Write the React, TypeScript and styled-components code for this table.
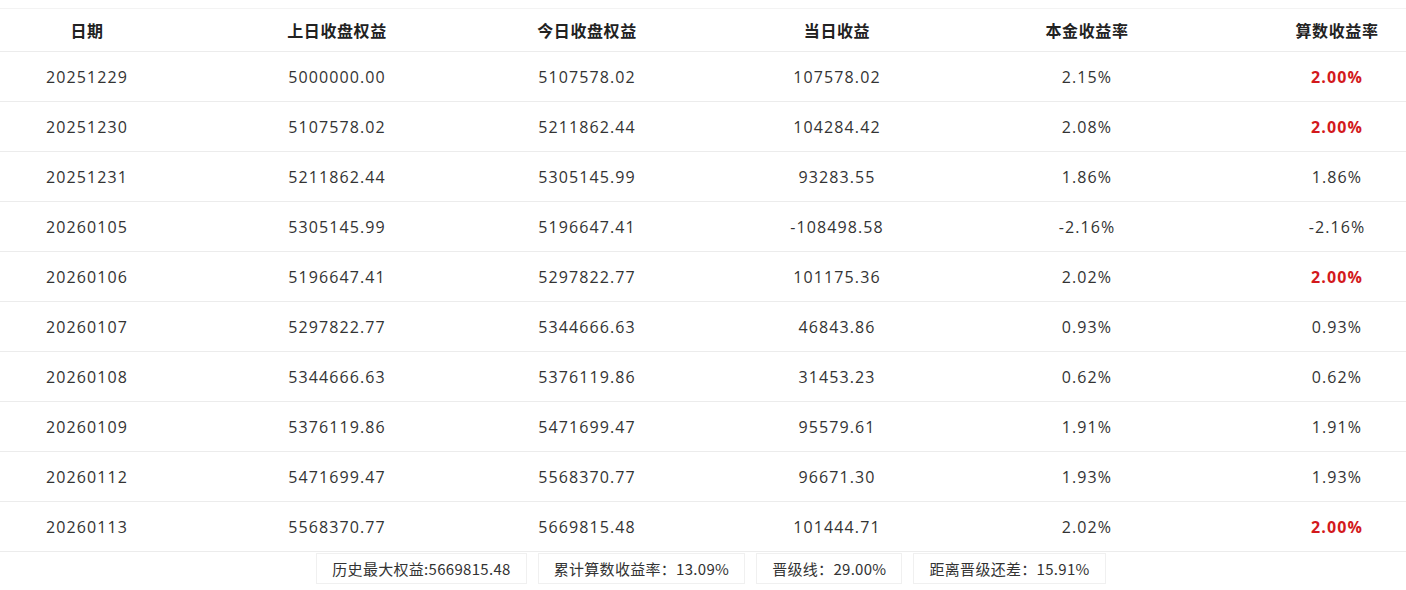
import React from "react";
import styled, { createGlobalStyle } from "styled-components";

const Global = createGlobalStyle`
  html, body { margin: 0; padding: 0; background: #fff; overflow: hidden; }
  body { font-family: "Open Sans", "Noto Sans CJK SC", sans-serif; color: #333; }
`;

const Page = styled.div`
  width: 1406px;
  overflow: hidden;
  padding-top: 8px;
`;

const Table = styled.div`
  width: 1462px;
  border-top: 1px solid #f3f3f3;
`;

const Row = styled.div<{ $head?: boolean }>`
  display: grid;
  grid-template-columns: 212px repeat(5, 250px);
  height: ${(p) => (p.$head ? 42 : 49)}px;
  border-bottom: 1px solid #ececec;
  align-items: center;
  & > :first-child {
    padding-right: 38px;
  }
`;

const HeadCell = styled.div`
  text-align: center;
  font-family: "Noto Sans CJK SC", sans-serif;
  font-weight: 700;
  font-size: 16px;
  color: #222;
  letter-spacing: 0.6px;
`;

const Cell = styled.div<{ $red?: boolean }>`
  text-align: center;
  font-size: 16px;
  letter-spacing: 1.1px;
  color: ${(p) => (p.$red ? "#d3191c" : "#333")};
  font-weight: ${(p) => (p.$red ? 700 : 400)};
`;

const Footer = styled.div`
  display: flex;
  justify-content: center;
  gap: 11px;
  padding-left: 16px;
  margin-top: 1px;
`;

const Stat = styled.div`
  height: 29px;
  display: flex;
  align-items: center;
  padding: 0 15px;
  border: 1px solid #f0f0f0;
  font-family: "Noto Sans CJK SC", sans-serif;
  font-size: 15px;
  letter-spacing: 0.3px;
  color: #333;
`;

const rows: [string, string, string, string, string, string][] = [
  ["20251229", "5000000.00", "5107578.02", "107578.02", "2.15%", "2.00%"],
  ["20251230", "5107578.02", "5211862.44", "104284.42", "2.08%", "2.00%"],
  ["20251231", "5211862.44", "5305145.99", "93283.55", "1.86%", "1.86%"],
  ["20260105", "5305145.99", "5196647.41", "-108498.58", "-2.16%", "-2.16%"],
  ["20260106", "5196647.41", "5297822.77", "101175.36", "2.02%", "2.00%"],
  ["20260107", "5297822.77", "5344666.63", "46843.86", "0.93%", "0.93%"],
  ["20260108", "5344666.63", "5376119.86", "31453.23", "0.62%", "0.62%"],
  ["20260109", "5376119.86", "5471699.47", "95579.61", "1.91%", "1.91%"],
  ["20260112", "5471699.47", "5568370.77", "96671.30", "1.93%", "1.93%"],
  ["20260113", "5568370.77", "5669815.48", "101444.71", "2.02%", "2.00%"],
];

const heads = ["日期", "上日收盘权益", "今日收盘权益", "当日收益", "本金收益率", "算数收益率"];

export default function App() {
  return (
    <Page>
      <Global />
      <Table>
        <Row $head>
          {heads.map((h) => (
            <HeadCell key={h}>{h}</HeadCell>
          ))}
        </Row>
        {rows.map((r) => (
          <Row key={r[0]}>
            {r.map((v, i) => (
              <Cell key={i} $red={i === 5 && v === "2.00%"}>
                {v}
              </Cell>
            ))}
          </Row>
        ))}
      </Table>
      <Footer>
        <Stat>历史最大权益:5669815.48</Stat>
        <Stat>累计算数收益率：13.09%</Stat>
        <Stat>晋级线：29.00%</Stat>
        <Stat>距离晋级还差：15.91%</Stat>
      </Footer>
    </Page>
  );
}
